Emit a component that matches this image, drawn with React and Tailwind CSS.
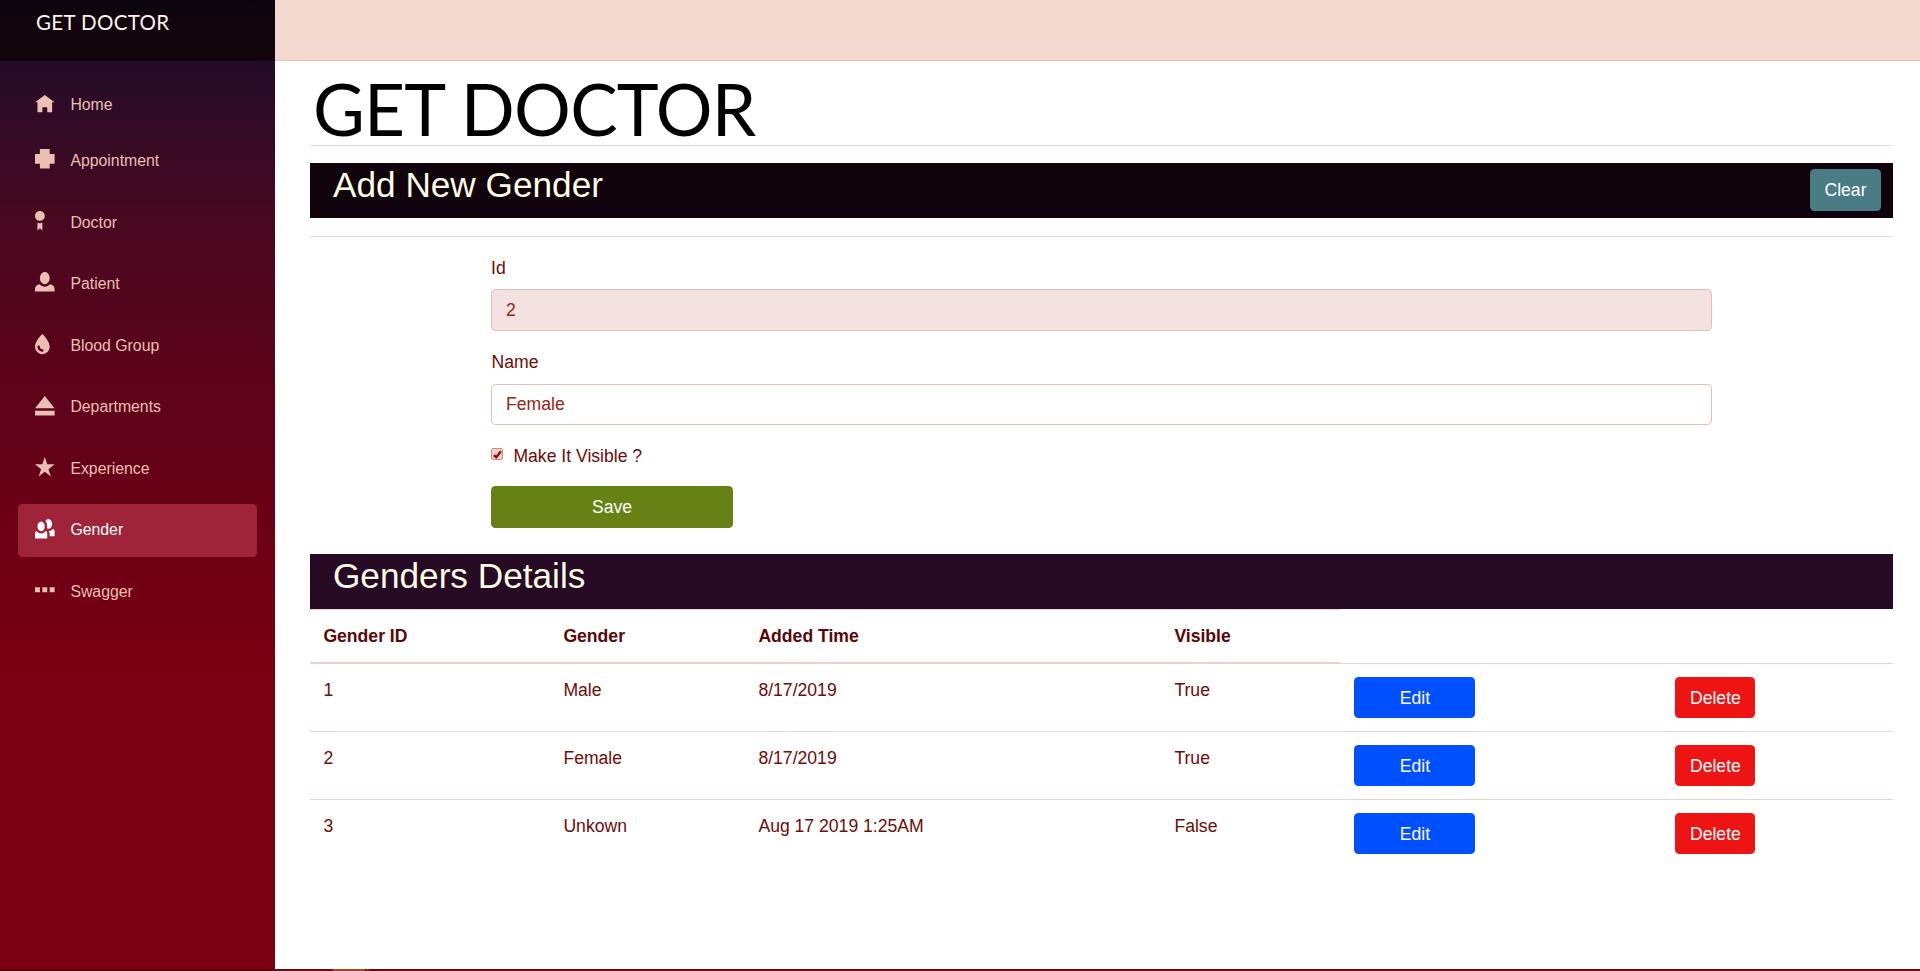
const navItems = [
  { label: "Home", d: "M4 0l-4 3h1v4h2v-2h2v2h2v-4.03l1 .03-4-3z" },
  { label: "Appointment", d: "M2 0v2h-2v4h2v2h4v-2h2v-4h-2v-2h-4z" },
  {
    label: "Doctor",
    d: "M2 0c-1.1 0-2 .9-2 2s.9 2 2 2 2-.9 2-2-.9-2-2-2zm-1 4.81v3.19l1-1 1 1v-3.19c-.31.11-.65.19-1 .19s-.69-.08-1-.19z",
  },
  {
    label: "Patient",
    d: "M4 0c-1.1 0-2 1.12-2 2.5s.9 2.5 2 2.5 2-1.12 2-2.5-.9-2.5-2-2.5zm-2.09 5c-1.06.05-1.91.92-1.91 2v1h8v-1c0-1.08-.84-1.95-1.91-2-.54.61-1.28 1-2.09 1-.81 0-1.55-.39-2.09-1z",
  },
  {
    label: "Blood Group",
    d: "M3 0l-.34.34c-.11.11-2.66 2.69-2.66 4.88 0 1.65 1.35 3 3 3s3-1.35 3-3c0-2.18-2.55-4.77-2.66-4.88l-.34-.34zm-1.5 4.72c.28 0 .5.22.5.5 0 .55.45 1 1 1 .28 0 .5.22.5.5s-.22.5-.5.5c-1.1 0-2-.9-2-2 0-.28.22-.5.5-.5z",
  },
  { label: "Departments", d: "M4 0l-4 5h8l-4-5zm-4 6v2h8v-2h-8z" },
  { label: "Experience", d: "M4 0l-1 3h-3l2.5 2-1 3 2.5-2 2.5 2-1-3 2.5-2h-3l-1-3z" },
  {
    label: "Gender",
    active: true,
    d: "M5.5 0c-.51 0-.95.35-1.22.88.45.54.72 1.28.72 2.13 0 .29-.03.55-.09.81.19.11.38.19.59.19.83 0 1.5-.9 1.5-2s-.67-2-1.5-2zM2.5 1c-.83 0-1.5.9-1.5 2s.67 2 1.5 2 1.5-.9 1.5-2-.67-2-1.5-2zM7.35 4.1c-.4.5-1.1.9-1.85.9.3.3.5.7.5 1.2v.8h2v-1.9c0-.5-.25-.85-.65-1zM.6 4.95c-.36.15-.6.5-.6.95v2.1h5v-2.1c0-.45-.24-.8-.6-.95-.45.53-1.1.95-1.9.95s-1.45-.42-1.9-.95z",
  },
  { label: "Swagger", d: "M0 3v2h2v-2h-2zm3 0v2h2v-2h-2zm3 0v2h2v-2h-2z" },
];

const genders = [
  { id: 1, name: "Male", added: "8/17/2019", visible: "True" },
  { id: 2, name: "Female", added: "8/17/2019", visible: "True" },
  { id: 3, name: "Unkown", added: "Aug 17 2019 1:25AM", visible: "False" },
];

function NavItem({ item, first }) {
  return (
    <li className={first ? "pb-[2.6px]" : "pb-[8.8px]"}>
      <a
        className={
          "flex h-[52.8px] items-center rounded-[4.4px] pl-[17.6px] text-[15.84px] " +
          (item.active ? "bg-[#9f2439] text-white" : "text-[#ebbfb3]")
        }
      >
        <span className={first ? "w-[35.2px] shrink-0 pb-[1.8px]" : "w-[35.2px] shrink-0 pb-[3.6px]"}>
          <svg viewBox="0 0 8 8" className="h-[19.6px] w-[19.6px] overflow-visible fill-current">
            <path d={item.d} />
          </svg>
        </span>
        <span className={first ? "pb-[1px]" : ""}>{item.label}</span>
      </a>
    </li>
  );
}

function Sidebar() {
  return (
    <aside className="flex w-[275px] shrink-0 flex-col bg-[linear-gradient(180deg,#1f0c2a_0px,#240c28_65px,#360a24_140px,#4a0820_230px,#5f031a_400px,#720014_590px,#7a0012_680px)]">
      <div className="h-[61px] bg-[linear-gradient(180deg,#08040f,#11040c_30%,#12040c)] pt-[8px] pl-[36px]">
        <a className="block font-['Lato',sans-serif] text-[20.5px] leading-[29px] tracking-[0.35px] text-[#fff4ee]">GET DOCTOR</a>
      </div>
      <ul className="px-[17.6px] pt-[18px]">
        {navItems.map((item, i) => (
          <NavItem key={item.label} item={item} first={i === 0} />
        ))}
      </ul>
    </aside>
  );
}

function GenderForm() {
  return (
    <form className="mr-[181px] ml-[181px] flex flex-col pt-[18px]">
      <label className="h-[34px] leading-[26px]">Id</label>
      <input
        readOnly
        value="2"
        className="h-[42px] rounded-[4.4px] border border-[#e8bcb8] bg-[#f4e2e1] px-[14px] text-[#95241b] outline-none"
      />
      <label className="mt-[18px] h-[35px] pl-[0.6px] leading-[26px]">Name</label>
      <input
        readOnly
        value="Female"
        className="h-[41px] rounded-[4.4px] border border-[#e8bcb8] bg-white px-[14px] text-[#95241b] outline-none"
      />
      <label className="mt-[18px] flex h-[26px] items-center">
        <span className="mb-[4px] flex h-[12px] w-[12px] items-center justify-center rounded-[2px] border border-[#d08a78] bg-[#f3d3c9]">
          <svg viewBox="0 0 10 10" className="h-[9px] w-[9px] fill-none stroke-[#841010] stroke-[2.6]">
            <path d="M1 5.6L3.6 8 8.8 1.4" />
          </svg>
        </span>
        <span className="ml-[10.4px]">Make It Visible ?</span>
      </label>
      <button type="button" className="mt-[17px] h-[42px] w-[242px] rounded-[4.4px] bg-[#668214] text-white">
        Save
      </button>
    </form>
  );
}

function GenderTable() {
  const head = "border-t border-t-[#f0d3d0] border-b-2 border-b-[#f0d0ce] px-[13.4px] pt-[13px] text-left align-top font-bold";
  const line = "border-t border-[#efd0cd] ";
  return (
    <table className="w-full table-fixed border-separate border-spacing-0 leading-[26px]">
      <colgroup>
        <col className="w-[240px]" />
        <col className="w-[195px]" />
        <col className="w-[416px]" />
        <col className="w-[180px]" />
        <col className="w-[321px]" />
        <col />
      </colgroup>
      <thead>
        <tr className="h-[55px] text-[#5c0505]">
          <th className={head}>Gender ID</th>
          <th className={head}>Gender</th>
          <th className={head}>Added Time</th>
          <th className={head}>Visible</th>
          <td className="border-b border-[#efd0cd]" />
          <td className="border-b border-[#efd0cd]" />
        </tr>
      </thead>
      <tbody>
        {genders.map((g, i) => {
          const cell = (i === 0 ? "" : line) + "px-[13.4px] pt-[13px] align-top";
          return (
            <tr key={g.id} className={i === 0 ? "h-[67px]" : "h-[68px]"}>
              <td className={cell}>{g.id}</td>
              <td className={cell}>{g.name}</td>
              <td className={cell}>{g.added}</td>
              <td className={cell}>{g.visible}</td>
              <td className={cell}>
                <button type="button" className="block h-[41px] w-[121px] rounded-[4.4px] bg-[#0050ff] text-white">
                  Edit
                </button>
              </td>
              <td className={cell}>
                <button type="button" className="block h-[41px] w-[80px] rounded-[4.4px] bg-[#ee1414] text-white">
                  Delete
                </button>
              </td>
            </tr>
          );
        })}
      </tbody>
    </table>
  );
}

export default function App() {
  return (
    <div className="flex h-[971px] w-[1920px] flex-col overflow-hidden bg-white font-['Liberation_Sans',Arial,sans-serif] text-[17.6px] text-[#6e0c08]">
      <div className="flex h-[969px]">
        <Sidebar />
        <main className="min-w-0 flex-1">
          <div className="h-[61px] border-b border-[#e8bfb1] bg-[#f3d8cf]" />
          <div className="pr-[27px] pl-[35px]">
            <h1 className="h-[84px] pt-[6px] pl-[3px] font-['Lato',sans-serif] text-[71px] leading-[84px] tracking-[-0.75px] whitespace-nowrap text-black">
              GET DOCTOR
            </h1>
            <hr className="h-px border-0 bg-[#f2d5d0]" />
            <div className="mt-[17px] flex h-[55px] justify-between bg-[#10030c] pr-[12px] pl-[23px]">
              <h2 className="text-[35.2px] leading-[44px] text-[#fffde4]">Add New Gender</h2>
              <button type="button" className="mt-[6px] h-[42px] w-[71px] rounded-[4.4px] bg-[#4a7c86] text-white">
                Clear
              </button>
            </div>
            <hr className="mt-[18px] h-px border-0 bg-[#f2d5ce]" />
            <GenderForm />
            <div className="mt-[26px] h-[55px] bg-[#270b25] pl-[23px]">
              <h2 className="text-[35.2px] leading-[44px] text-[#fffde4]">Genders Details</h2>
            </div>
            <GenderTable />
          </div>
        </main>
      </div>
      <div className="flex h-[2px] bg-[#6b0a0c]">
        <div className="w-[275px] bg-[#5c0008]" />
        <div className="ml-[58px] w-[32px] bg-[#a8452c]" />
        <div className="ml-px w-[3px] bg-[#8f2e1c]" />
      </div>
    </div>
  );
}
